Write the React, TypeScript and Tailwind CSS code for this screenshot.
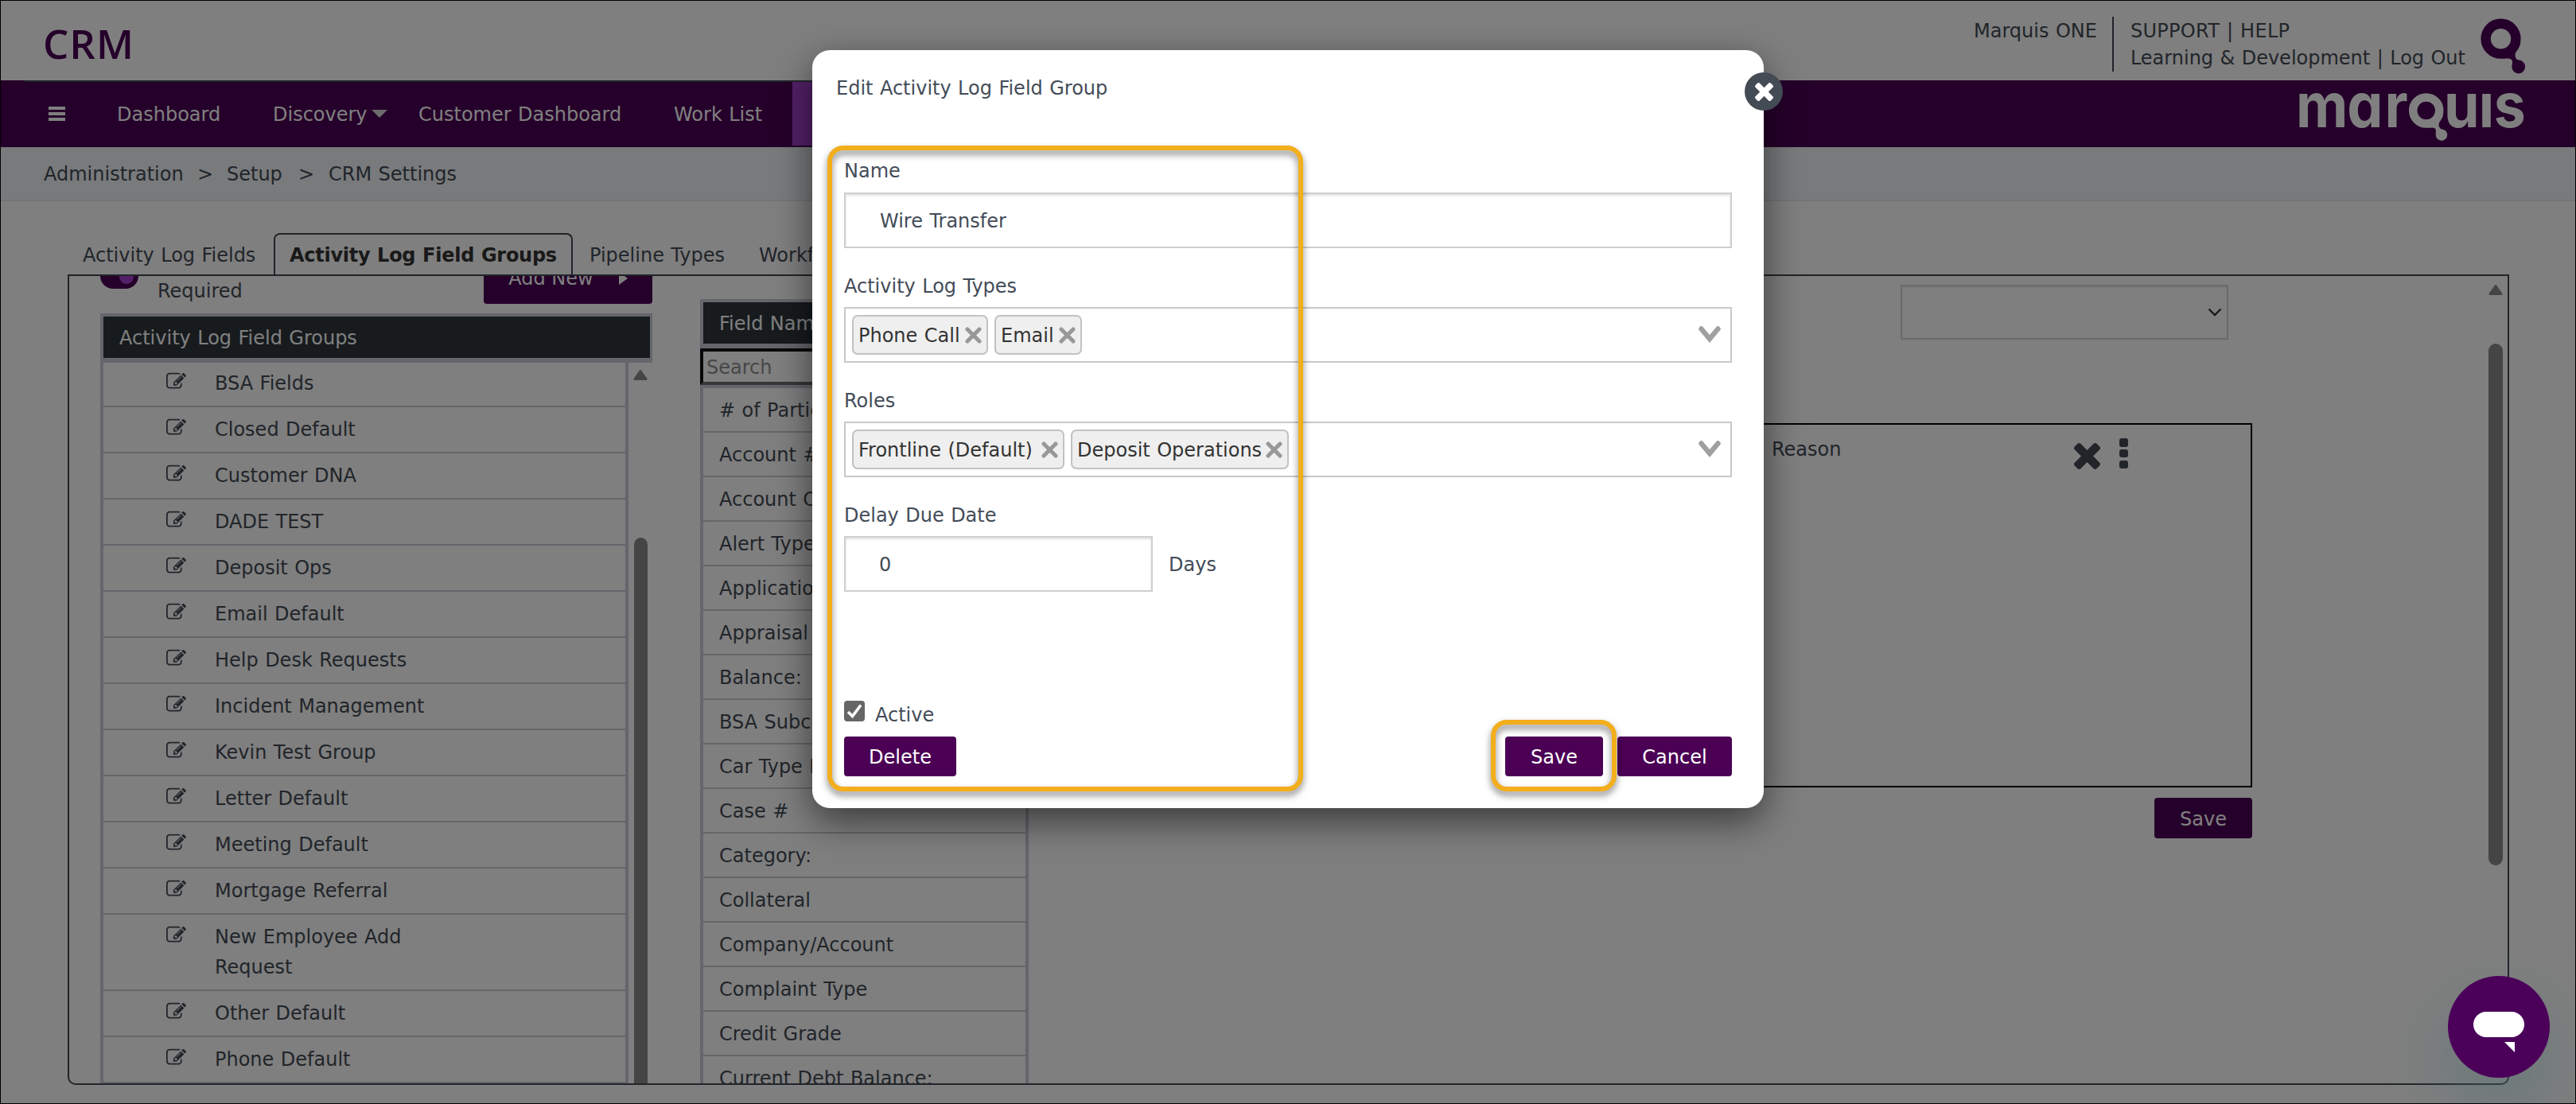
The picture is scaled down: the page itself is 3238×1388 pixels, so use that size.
import type { ReactNode } from 'react';

const groups = [
    'BSA Fields',
    'Closed Default',
    'Customer DNA',
    'DADE TEST',
    'Deposit Ops',
    'Email Default',
    'Help Desk Requests',
    'Incident Management',
    'Kevin Test Group',
    'Letter Default',
    'Meeting Default',
    'Mortgage Referral',
    'New Employee Add Request',
    'Other Default',
    'Phone Default',
];

const fields = [
    '# of Participants',
    'Account #',
    'Account Owner',
    'Alert Type',
    'Application Date',
    'Appraisal',
    'Balance:',
    'BSA Subcategory',
    'Car Type Info',
    'Case #',
    'Category:',
    'Collateral',
    'Company/Account',
    'Complaint Type',
    'Credit Grade',
    'Current Debt Balance:',
];

function TimesIcon({ className }: { className?: string }) {
    return (
        <svg className={className} fill="currentColor" viewBox="110 366 1188 1188">
            <path d="M1298 1322q0 40-28 68l-136 136q-28 28-68 28t-68-28l-294-294-294 294q-28 28-68 28t-68-28l-136-136q-28-28-28-68t28-68l294-294-294-294q-28-28-28-68t28-68l136-136q28-28 68-28t68 28l294 294 294-294q28-28 68-28t68 28l136 136q28 28 28 68t-28 68l-294 294 294 294q28 28 28 68z" />
        </svg>
    );
}

function EditIcon() {
    return (
        <svg className="mt-1 ml-[79px] size-[25px] shrink-0" fill="currentColor" viewBox="0 0 1792 1792">
            <path d="M888 1184l116-116-152-152-116 116v56h96v96h56zm440-720q-16-16-33 1l-350 350q-17 17-1 33t33-1l350-350q17-17 1-33zm80 594v190q0 119-84.5 203.5t-203.5 84.5h-832q-119 0-203.5-84.5t-84.5-203.5v-832q0-119 84.5-203.5t203.5-84.5h832q63 0 117 25 15 7 18 23 3 17-9 29l-49 49q-14 14-32 8-23-6-45-6h-832q-66 0-113 47t-47 113v832q0 66 47 113t113 47h832q66 0 113-47t47-113v-126q0-13 9-22l64-64q15-15 35-7t20 29zm-96-738l288 288-672 672h-288v-288zm444 132l-92 92-288-288 92-92q28-28 68-28t68 28l152 152q28 28 28 68t-28 68z" />
        </svg>
    );
}

function ScrollUpArrow({ className }: { className?: string }) {
    return (
        <svg className={className} viewBox="0 0 18 14">
            <path d="M9 2 L16 12 H2 Z" fill="#8a8a8a" stroke="#8a8a8a" strokeLinejoin="round" strokeWidth="3" />
        </svg>
    );
}

function QMark() {
    return (
        <svg className="mt-[23px] ml-[18px] h-[71px] w-[58px]" viewBox="0 0 58 71">
            <circle cx="26.5" cy="25.7" fill="none" r="18.9" stroke="#4b0055" strokeWidth="12.4" />
            <path d="M51 32 C49 40 43.5 42 44.7 48 C45.3 51 47 52.3 49 52.6 L41 60 C40.5 56 43 51 36 50.4 L28 50.6 Z" fill="#4b0055" />
            <circle cx="48.7" cy="61" fill="#4b0055" r="8.4" />
        </svg>
    );
}

function MarquisLogo() {
    return (
        <svg
            className="mt-[12px] mr-[68px] h-[70px] w-[284px] overflow-visible font-['Inter'] text-[77px] font-bold [font-feature-settings:'cv11'] [word-spacing:0]"
            viewBox="0 0 284 70"
        >
            <text fill="#fff" transform="scale(0.93 1)" x="0 69 120" y="47">
                mar<tspan fill="transparent" x="150">q</tspan><tspan x="200 247 267.5">uis</tspan>
            </text>
            {/* the wordmark's i has no dot */}
            <rect fill="#4b0055" height="16" width="22" x="228" y="-12" />
            <circle cx="163.7" cy="26" fill="none" r="16.5" stroke="#fff" strokeWidth="10.5" />
            <path d="M185 31 C184 38 178.5 40 179.7 45.3 C180.3 48 182 49.5 184 49.8 L176 58 C175 53 178 48.5 172 47.6 L166 47.8 Z" fill="#fff" />
            <circle cx="183" cy="56.7" fill="#fff" r="7.2" />
        </svg>
    );
}

function Button({ children, className }: { children: ReactNode; className?: string }) {
    return (
        <button className={`flex items-center justify-center rounded-[4px] bg-[#4b0055] pt-0.5 text-white ${className}`} type="button">
            {children}
        </button>
    );
}

function Header() {
    return (
        <header className="flex h-[101px] justify-between">
            <div className="mt-[20px] ml-[54px] font-['Open_Sans'] text-[51px] leading-[68px] font-semibold tracking-[1px] text-[#4b0055]">CRM</div>
            <div className="mr-[63px] flex">
                <div className="mt-[21px] mr-[19px] leading-9">Marquis ONE</div>
                <div className="mt-[21px] h-[69px] border-l-2 pl-[21px] leading-[34px]">
                    <div className="mt-px tracking-[0.3px]">SUPPORT | HELP</div>
                    <div>Learning &amp; Development | Log Out</div>
                </div>
                <QMark />
            </div>
        </header>
    );
}

function NavBar() {
    return (
        <nav className="flex h-[84px] justify-between bg-[#4b0055] text-white">
            <div className="ml-[31px] flex w-[1200px] border-t-2 border-[#434a54]">
                <div className="mt-[31px] ml-[30px] flex h-[18px] w-[21px] flex-col justify-between">
                    <span className="h-[4px] bg-white" />
                    <span className="h-[4px] bg-white" />
                    <span className="h-[4px] bg-white" />
                </div>
                <span className="mt-[23px] ml-[65px] w-[196px] leading-9">Dashboard</span>
                <span className="mt-[23px] w-[124px] leading-9">Discovery</span>
                <svg className="mt-[35px] mr-[39px] h-[10px] w-[20px] shrink-0" viewBox="0 0 20 10">
                    <path d="M0 0 H20 L10 10 Z" fill="#d8d8d8" />
                </svg>
                <span className="mt-[23px] w-[321px] shrink-0 leading-9">Customer Dashboard</span>
                <span className="mt-[23px] w-[149px] shrink-0 leading-9">Work List</span>
                <span className="mb-[2px] flex-1 bg-[#a640d0]" />
            </div>
            <MarquisLogo />
        </nav>
    );
}

function GroupList() {
    return (
        <div className="ml-[39px] w-[694px] shrink-0">
            <div className="flex h-[47px] items-start">
                <div className="flex h-[16px] w-[48px] justify-end rounded-b-[16px] bg-[#4b0055] pr-[6px]">
                    <span className="h-[10px] w-[18px] rounded-b-[9px] bg-[#a640d0]" />
                </div>
                <span className="mt-px ml-[24px] leading-9">Required</span>
                <Button className="-mt-[31px] ml-auto h-[66px] w-[212px]">
                    Add New
                    <svg className="ml-8 h-[16px] w-[11px]" viewBox="0 0 11 16">
                        <path d="M0 0 L11 8 L0 16 Z" fill="#fff" />
                    </svg>
                </Button>
            </div>
            <div className="h-[62px] bg-[#cbccd6] pt-1 pr-[3px] pl-1">
                <div className="h-[52px] bg-[#2f373d] pt-[9px] pl-5 leading-9 text-white">Activity Log Field Groups</div>
            </div>
            <div className="flex">
                <div className="w-[664px] border-x-4 border-[#cbccd6]">
                    {groups.map((name, i) => (
                        <div
                            className={`flex border-b-2 border-[#cbccd6] leading-[38px] ${i === 0 ? 'h-[56px] pt-[7px]' : 'min-h-[58px] pt-[9px] pb-[9px]'}`}
                            key={name}
                        >
                            <EditIcon />
                            <span className="ml-[36px] w-[290px]">{name}</span>
                        </div>
                    ))}
                </div>
                <div className="w-[30px] pt-[8px]">
                    <ScrollUpArrow className="ml-[6px] h-[15px] w-[18px]" />
                    <div className="mt-[197px] ml-[7px] h-[800px] w-[17px] rounded-t-[9px] bg-[#8a8a8a]" />
                </div>
            </div>
        </div>
    );
}

function FieldList() {
    return (
        <div className="mt-[29px] ml-[60px] w-[413px] shrink-0">
            <div className="h-[62px] bg-[#cbccd6] px-1 pt-1">
                <div className="h-[52px] bg-[#2f373d] pt-[9px] pl-5 leading-9 text-white">Field Name</div>
            </div>
            <div className="h-[46px] border-4 border-t-[#141414] border-r-[#6e6e6e] border-b-[#6e6e6e] border-l-[#141414] pt-0.5 pl-1 leading-9 text-[#8e8e8e]">
                Search
            </div>
            <div className="border-x-4 border-t-4 border-[#cbccd6]">
                {fields.map((name) => (
                    <div className="h-[56px] border-b-2 border-[#cbccd6] pt-[10px] pl-5 leading-9" key={name}>
                        {name}
                    </div>
                ))}
            </div>
        </div>
    );
}

function Preview() {
    return (
        <div className="ml-[60px] flex w-[1478px] flex-col items-end">
            <div className="mt-[11px] mr-[30px] flex h-[69px] w-[412px] items-center justify-end border-2 border-[#d4d4d4] pr-[6px] shadow-[inset_0_2px_2px_rgba(0,0,0,0.08)]">
                <svg className="h-[11px] w-[18px]" fill="none" viewBox="0 0 18 11">
                    <path d="M1.5 1.5 L9 9 L16.5 1.5" stroke="#333" strokeWidth="2.4" />
                </svg>
            </div>
            <div className="mt-[105px] flex h-[458px] w-full border-2 border-black">
                <span className="mt-[13px] ml-[872px] w-[381px] leading-9">Reason</span>
                <TimesIcon className="mt-[23px] -ml-px size-[33px]" />
                <div className="mt-[17px] ml-[24px] flex h-[38px] flex-col justify-between">
                    <span className="size-[10.5px] rounded-[3px] bg-[#434a54]" />
                    <span className="size-[10.5px] rounded-[3px] bg-[#434a54]" />
                    <span className="size-[10.5px] rounded-[3px] bg-[#434a54]" />
                </div>
            </div>
            <Button className="mt-[13px] h-[51px] w-[123px]">Save</Button>
        </div>
    );
}

function Chip({ children, className }: { children: ReactNode; className: string }) {
    return (
        <span
            className={`flex h-[50px] shrink-0 items-center justify-between rounded-[7px] border-2 border-[#c2c2c2] bg-[#efefef] pr-[6px] pl-[6px] whitespace-nowrap text-[#333] ${className}`}
        >
            <span className="pt-0.5">{children}</span>
            <svg className="size-[21px] shrink-0" fill="none" viewBox="0 0 21 21">
                <path d="M3 3 L18 18 M18 3 L3 18" stroke="#989898" strokeLinecap="round" strokeWidth="5" />
            </svg>
        </span>
    );
}

function MultiSelect({ children, label }: { children: ReactNode; label: string }) {
    return (
        <div className="mt-[30px]">
            <div className="leading-9">{label}</div>
            <div className="mt-2 flex h-[70px] items-center gap-[8px] border-2 border-[#c9c9c9] pl-2">
                {children}
                <svg className="mr-[12px] ml-auto h-[24px] w-[28px]" fill="none" viewBox="0 0 28 24">
                    <path d="M3.5 4.5 L14 17 L24.5 4.5" stroke="#a0a0a0" strokeLinecap="round" strokeWidth="6.4" />
                </svg>
            </div>
        </div>
    );
}

function EditGroupDialog() {
    return (
        <div className="absolute top-[63px] left-[1021px] h-[953px] w-[1196px] rounded-[22px] bg-white px-[40px] pt-[30px] text-[#434c58] shadow-[0_16px_48px_rgba(0,0,0,0.55)]">
            <h2 className="-ml-[10px] leading-9">Edit Activity Log Field Group</h2>
            <div className="mt-[68px] leading-9">Name</div>
            <div className="mt-[9px] flex h-[70px] items-center border-2 border-[#cfcfcf] pt-0.5 pl-[43px] shadow-[inset_0_2px_3px_rgba(0,0,0,0.12)]">
                Wire Transfer
            </div>
            <MultiSelect label="Activity Log Types">
                <Chip className="w-[171px]">Phone Call</Chip>
                <Chip className="w-[110px]">Email</Chip>
            </MultiSelect>
            <MultiSelect label="Roles">
                <Chip className="w-[267px]">Frontline (Default)</Chip>
                <Chip className="w-[274px]">Deposit Operations</Chip>
            </MultiSelect>
            <div className="mt-[30px] leading-9">Delay Due Date</div>
            <div className="mt-2 flex items-center">
                <div className="flex h-[70px] w-[388px] items-center border-2 border-[#cfcfcf] pt-0.5 pl-[42px] shadow-[inset_0_2px_3px_rgba(0,0,0,0.12)]">
                    0
                </div>
                <span className="ml-[20px] pt-0.5">Days</span>
            </div>
            <div className="mt-[137px] flex h-9 items-start">
                <span className="flex size-[26px] items-center justify-center rounded-[4px] bg-[#666]">
                    <svg className="size-[20px]" fill="none" viewBox="0 0 20 20">
                        <path d="M2 11 L7.5 16.5 L18 2.5" stroke="#fff" strokeWidth="3.6" />
                    </svg>
                </span>
                <span className="ml-[13px] leading-9">Active</span>
            </div>
            <div className="mt-[9px] flex">
                <Button className="h-[50px] w-[141px]">Delete</Button>
                <Button className="ml-auto h-[50px] w-[123px]">Save</Button>
                <Button className="ml-[18px] h-[50px] w-[144px]">Cancel</Button>
            </div>

            <span className="absolute top-[28px] -right-[24px] flex size-[48px] items-center justify-center rounded-full bg-[#434b54]">
                <TimesIcon className="size-[23px] text-white" />
            </span>

            {/* callout outlines */}
            <span className="absolute top-[120px] left-[19px] h-[812px] w-[598px] rounded-[20px] border-6 border-[#f2ae1c] drop-shadow-[0_5px_4px_rgba(0,0,0,0.5)]" />
            <span className="absolute top-[842px] left-[853px] h-[90px] w-[158px] rounded-[20px] border-6 border-[#f2ae1c] drop-shadow-[0_5px_4px_rgba(0,0,0,0.5)]" />
        </div>
    );
}

export default function App() {
    return (
        <div className="relative h-[1388px] w-[3238px] overflow-hidden bg-white font-['Verdana','DejaVu_Sans',sans-serif] text-[24px] text-[#434a54] [word-spacing:0.8px]">
            <Header />
            <NavBar />
            <div className="flex h-[68px] border-b-2 border-[#e6e8ea] bg-[#f1f5f9] pt-[16px] pl-[55px] leading-9">
                <span className="w-[193px]">Administration</span>
                <span className="w-[37px]">&gt;</span>
                <span className="w-[90px]">Setup</span>
                <span className="w-[38px]">&gt;</span>
                <span>CRM Settings</span>
            </div>

            <main className="pt-[40px] pl-[85px]">
                <div className="flex h-[52px] leading-9">
                    <span className="w-[259px] pt-[10px] pl-[19px]">Activity Log Fields</span>
                    <span className="w-[376px] rounded-t-[8px] border-2 border-b-0 border-[#434a54] pt-[8px] pl-[18px] font-bold tracking-[-0.28px] whitespace-nowrap text-[#333]">
                        Activity Log Field Groups
                    </span>
                    <span className="w-[234px] pt-[10px] pl-[21px]">Pipeline Types</span>
                    <span className="pt-[10px]">Workflow</span>
                </div>
                <div className="flex h-[1019px] w-[3069px] overflow-hidden rounded-b-[10px] border-2 border-[#434a54]">
                    <GroupList />
                    <FieldList />
                    <Preview />
                    <div className="mr-[6px] ml-auto w-[18px] pt-[10px]">
                        <ScrollUpArrow className="h-[15px] w-[18px]" />
                        <div className="mt-[60px] h-[656px] w-[18px] rounded-full bg-[#8a8a8a]" />
                    </div>
                </div>
            </main>

            <div className="absolute inset-0 bg-black/50" />
            <EditGroupDialog />

            <div className="absolute top-[1227px] left-[3077px] flex size-[128px] flex-col items-center rounded-full bg-[#4b005a] pt-[45px] shadow-[0_40px_80px_rgba(83,115,120,0.5)]">
                <span className="h-[32px] w-[64px] rounded-full bg-white" />
                <svg className="mt-[6px] ml-[27px] size-[13px]" viewBox="0 0 13 13">
                    <path d="M0 0 H13 V13 Z" fill="#fff" />
                </svg>
            </div>
            <div className="pointer-events-none absolute inset-0 border border-black" />
        </div>
    );
}
